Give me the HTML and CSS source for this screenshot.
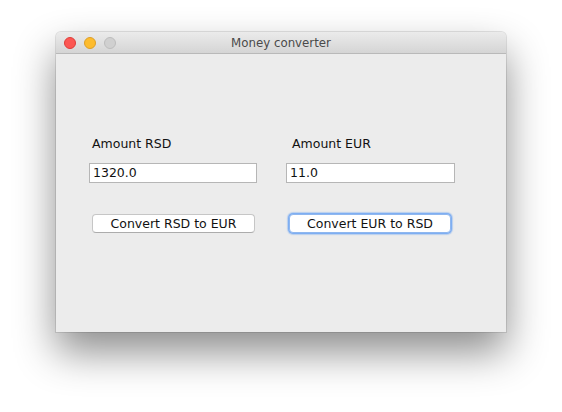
FILE: index.html
```html
<!DOCTYPE html>
<html>
<head>
<meta charset="utf-8">
<link rel="stylesheet" href="styles.css">
</head>
<body>
<div class="window">
  <div class="titlebar">
    <div class="lights">
      <span class="light red"></span>
      <span class="light yellow"></span>
      <span class="light grey"></span>
    </div>
    <div class="title">Money converter</div>
    <div></div>
  </div>
  <div class="content">
    <div class="col col-rsd">
      <div class="label">Amount RSD</div>
      <div class="field">1320.0</div>
      <div class="button">Convert RSD to EUR</div>
    </div>
    <div class="col col-eur">
      <div class="label">Amount EUR</div>
      <div class="field">11.0</div>
      <div class="button focused">Convert EUR to RSD</div>
    </div>
  </div>
</div>
</body>
</html>
```

FILE: styles.css
```css
html, body {
  margin: 0;
  padding: 0;
  background: #ffffff;
}
body {
  font-family: "DejaVu Sans", "Liberation Sans", sans-serif;
  color: #1a1a1a;
  min-height: 412px;
  padding-top: 32px;
  box-sizing: border-box;
}
.window {
  margin: 0 0 0 56px;
  width: 450px;
  height: 300px;
  background: #ececec;
  border-radius: 5px 5px 0 0;
  box-shadow: 0 20px 40px rgba(0, 0, 0, 0.45), 0 0 0 1px rgba(0, 0, 0, 0.10);
  display: flex;
  flex-direction: column;
}
.titlebar {
  height: 21px;
  border-bottom: 1px solid #b9b9b9;
  background: linear-gradient(#ebebeb, #d5d5d5);
  border-radius: 5px 5px 0 0;
  display: grid;
  grid-template-columns: 1fr auto 1fr;
  align-items: center;
}
.lights {
  display: flex;
  gap: 8px;
  padding-left: 8px;
}
.light {
  width: 10px;
  height: 10px;
  border-radius: 50%;
  border: 1px solid transparent;
}
.red { background: #fc5753; border-color: #df3d39; }
.yellow { background: #fdbc2e; border-color: #de9f27; }
.grey { background: #d0d0d0; border-color: #bdbdbd; }
.title {
  font-size: 11.8px;
  color: #4a4a4a;
  line-height: 21px;
  padding-top: 1px;
}
.content {
  display: flex;
  padding: 82px 0 0 33px;
  gap: 28px;
}
.col {
  width: 169px;
  display: flex;
  flex-direction: column;
  align-items: flex-start;
}
.label {
  font-size: 12.5px;
  line-height: 16px;
  margin-left: 3px;
  color: #111;
}
.col-eur .label { margin-left: 6px; }
.field {
  margin-top: 11px;
  box-sizing: border-box;
  width: 168px;
  height: 20px;
  background: #ffffff;
  border: 1px solid #b6b6b6;
  font-size: 12.5px;
  line-height: 18px;
  padding-left: 3px;
  color: #111;
}
.col-eur .field { width: 169px; }
.button {
  margin-top: 31px;
  margin-left: 3px;
  box-sizing: border-box;
  width: 163px;
  height: 19px;
  background: #ffffff;
  border: 1px solid #c6c6c6;
  border-bottom-color: #acacac;
  border-radius: 4px;
  font-size: 12.5px;
  line-height: 17px;
  text-align: center;
  color: #111;
}
.button.focused {
  margin-left: 3px;
  width: 162px;
  border-color: #8fb7ef;
  box-shadow: 0 0 0 1px #7eaef2, 0 0 1px 2px rgba(120, 170, 240, 0.45);
}
```
